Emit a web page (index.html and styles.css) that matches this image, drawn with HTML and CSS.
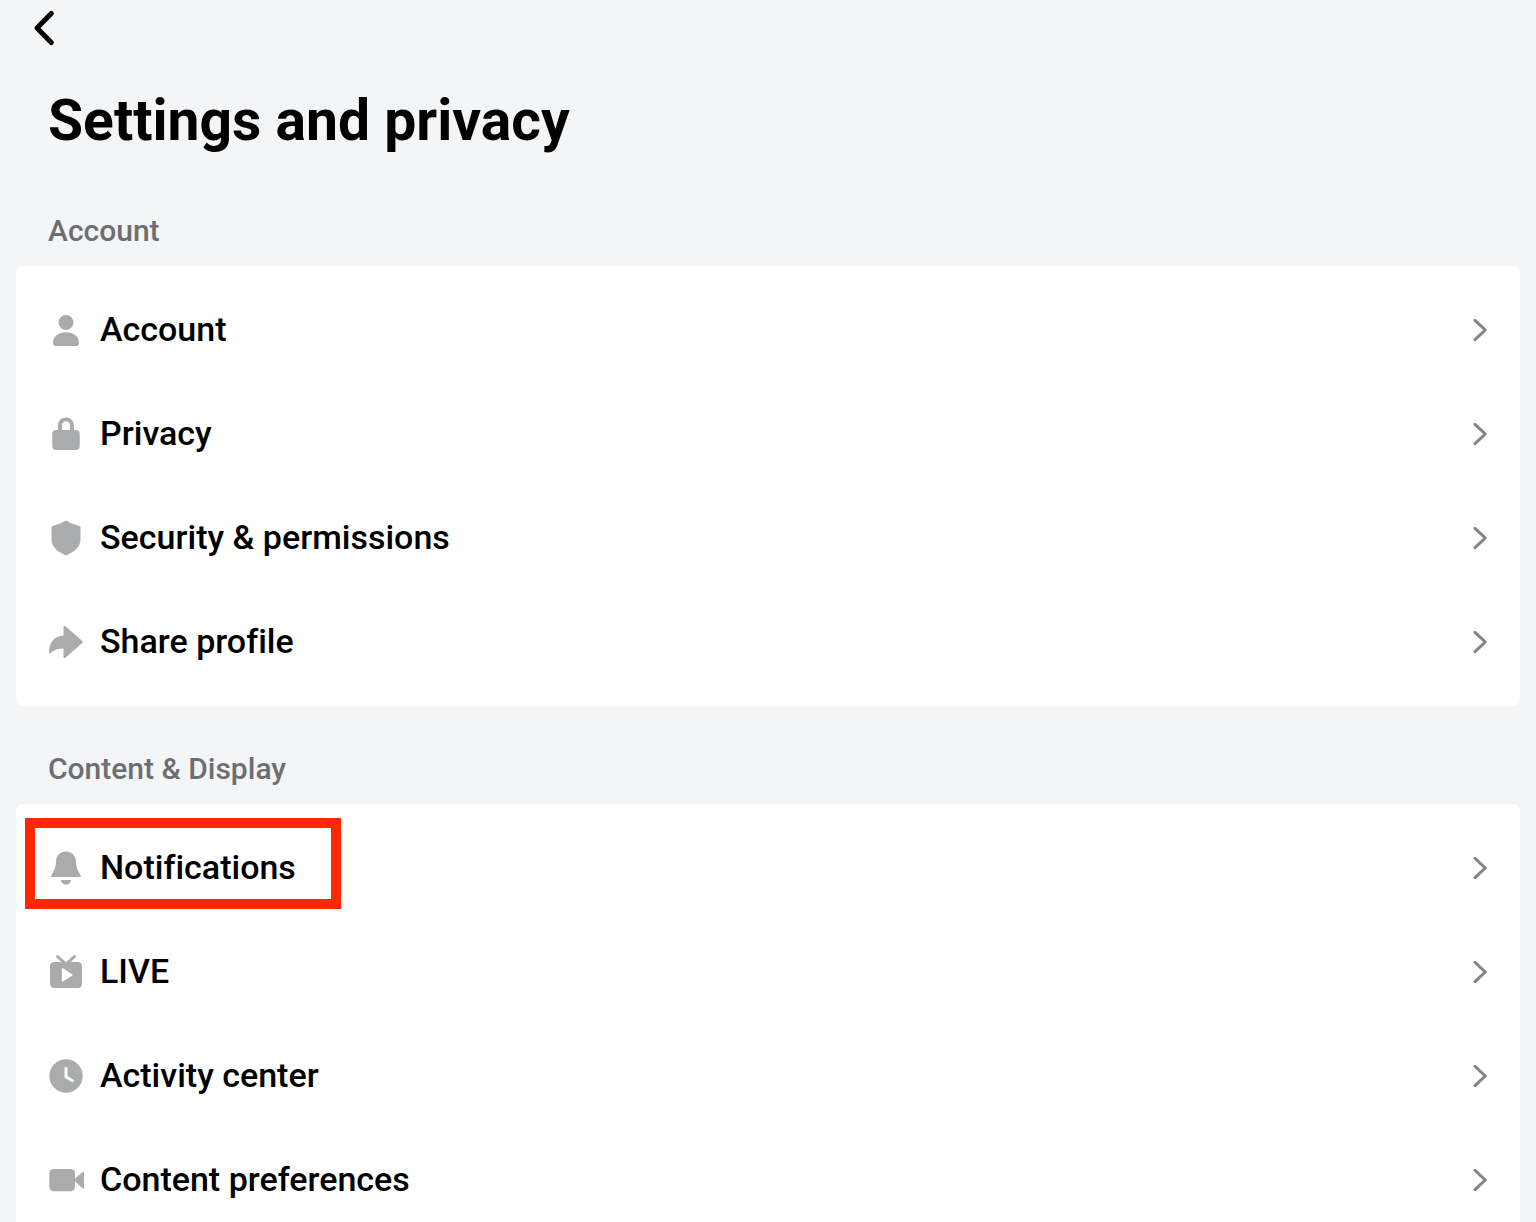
FILE: index.html
```html
<!DOCTYPE html>
<html lang="en">
	<head>
		<meta charset="utf-8">
		<title>Settings and privacy</title>
		<link rel="stylesheet" href="styles.css">
	</head>
	<body>
		<header class="header">
			<button class="back" type="button" aria-label="Back">
				<svg width="24" height="40" viewBox="0 0 24 40"><path d="M19.300 5.500 5 20l14.300 14.500" fill="none" stroke="#000" stroke-width="5" stroke-linecap="round" stroke-linejoin="round"/></svg>
			</button>
			<h1 class="title">Settings and privacy</h1>
		</header>
		<main>
			<section class="group">
				<h2 class="group-title">Account</h2>
				<ul class="list">
					<li class="item">
						<a class="link" href="#account">
							<svg class="icon" viewBox="0 0 36 36"><circle cx="18" cy="10.500" r="7.500"/><path d="M18 20.300c7.500 0 13 4.700 13 10.400 0 2-.9 3.300-2.600 3.300H7.600C5.900 34 5 32.700 5 30.700c0-5.700 5.500-10.400 13-10.400Z"/></svg>
							<span class="label">Account</span>
							<svg class="arrow" viewBox="0 0 16 24"><path d="M3 2.300 13.300 12 3 21.700"/></svg>
						</a>
					</li>
					<li class="item">
						<a class="link" href="#privacy">
							<svg class="icon" viewBox="0 0 36 36"><path fill-rule="evenodd" d="M10 14v-4.300C10 5 13.400 1.500 18 1.500S26 5 26 9.700V14h1.500c3 0 4.200 1.200 4.200 4.200v11.500c0 3-1.200 4.300-4.200 4.300h-19c-3 0-4.200-1.300-4.200-4.300V18.200c0-3 1.200-4.200 4.200-4.200H10Zm4 0h8V9.700c0-2.600-1.600-4.400-4-4.400s-4 1.800-4 4.400V14Z"/></svg>
							<span class="label">Privacy</span>
							<svg class="arrow" viewBox="0 0 16 24"><path d="M3 2.300 13.300 12 3 21.700"/></svg>
						</a>
					</li>
					<li class="item">
						<a class="link" href="#security">
							<svg class="icon" viewBox="0 0 36 36"><path d="M17 1.100c.7-.4 1.300-.4 2 0 4.100 2.600 8 4.100 12.300 4.800.8.100 1.200.6 1.200 1.400V19c0 7.600-5.500 12.600-13.500 15.900-.7.300-1.300.3-2 0C9 31.600 3.500 26.600 3.500 19V7.300c0-.8.400-1.300 1.200-1.400C9 5.200 12.900 3.700 17 1.100Z"/></svg>
							<span class="label">Security &amp; permissions</span>
							<svg class="arrow" viewBox="0 0 16 24"><path d="M3 2.300 13.300 12 3 21.700"/></svg>
						</a>
					</li>
					<li class="item">
						<a class="link" href="#share">
							<svg class="icon" viewBox="0 0 36 36"><path d="M15.500 3.200c0-1.300 1.200-1.700 2.200-.8l16.500 14.500c.8.700.8 1.500 0 2.200L17.700 33.600c-1 .9-2.200.5-2.200-.8v-8.300c-5-.1-9 1-12.600 4.300-1 .9-2 .4-1.900-.9C1.600 18.500 6.400 12 15.500 11.600V3.200Z"/></svg>
							<span class="label">Share profile</span>
							<svg class="arrow" viewBox="0 0 16 24"><path d="M3 2.300 13.300 12 3 21.700"/></svg>
						</a>
					</li>
				</ul>
			</section>
			<section class="group">
				<h2 class="group-title">Content &amp; Display</h2>
				<ul class="list">
					<li class="item highlight">
						<a class="link" href="#notifications">
							<svg class="icon" viewBox="0 0 36 36"><path d="M18 1.500c5.700 0 9.600 4 10 9.700.3 5.300 1.100 8.800 4.600 13.900.6.900.2 1.900-.9 1.900H4.300c-1.100 0-1.500-1-.9-1.900C6.900 20 7.700 16.500 8 11.200 8.400 5.500 12.300 1.500 18 1.500ZM13 30h10c0 2.500-2.200 4.500-5 4.500s-5-2-5-4.500Z"/></svg>
							<span class="label">Notifications</span>
							<svg class="arrow" viewBox="0 0 16 24"><path d="M3 2.300 13.300 12 3 21.700"/></svg>
						</a>
					</li>
					<li class="item">
						<a class="link" href="#live">
							<svg class="icon" viewBox="0 0 36 36"><path fill-rule="evenodd" d="M6.500 8h23c3 0 4.500 1.500 4.500 4.500v17c0 3-1.500 4.500-4.500 4.500h-23c-3 0-4.500-1.500-4.500-4.500v-17C2 9.500 3.500 8 6.500 8Zm7.300 6.900v12c0 .7.600 1.100 1.200.7l9.100-5.900c.5-.3.500-1.100 0-1.400L15 14.200c-.6-.4-1.200 0-1.200.7Z"/><path d="m9.500 2.500 8.500 7.700 8.500-7.700" fill="none" stroke="#a9abac" stroke-width="3" stroke-linecap="round"/></svg>
							<span class="label">LIVE</span>
							<svg class="arrow" viewBox="0 0 16 24"><path d="M3 2.300 13.300 12 3 21.700"/></svg>
						</a>
					</li>
					<li class="item">
						<a class="link" href="#activity">
							<svg class="icon" viewBox="0 0 36 36"><circle cx="18" cy="18" r="16.700"/><path d="M18 9.300v9.500l7.300 4.500" fill="none" stroke="#fff" stroke-width="3"/></svg>
							<span class="label">Activity center</span>
							<svg class="arrow" viewBox="0 0 16 24"><path d="M3 2.300 13.300 12 3 21.700"/></svg>
						</a>
					</li>
					<li class="item">
						<a class="link" href="#content">
							<svg class="icon" viewBox="0 0 36 36"><rect x="1.300" y="7" width="25.700" height="22.300" rx="4.500"/><path d="M26.500 18c0-.7.300-1.300.9-1.800l6.600-5.700c1-.9 2-.5 2 .7v14.200c0 1.200-1 1.600-2 .7l-6.600-6.300c-.6-.5-.9-1.100-.9-1.800Z"/></svg>
							<span class="label">Content preferences</span>
							<svg class="arrow" viewBox="0 0 16 24"><path d="M3 2.300 13.300 12 3 21.700"/></svg>
						</a>
					</li>
				</ul>
			</section>
		</main>
	</body>
</html>
```
FILE: styles.css
```css
* {
	margin: 0;
	padding: 0;
	box-sizing: border-box;
}

ul {
	list-style: none;
}

body {
	height: 100vh;
	overflow: hidden;
	padding: 0 16px;
	background: #f4f5f7;
	color: #000;
	font-family: Roboto, "Liberation Sans", sans-serif;
	font-variant-ligatures: none;
}

.header {
	padding: 8px 16px 0;
}

.back {
	display: block;
	width: 24px;
	height: 40px;
	border: 0;
	background: none;
	cursor: pointer;
}

.title {
	margin-top: 41px;
	padding: 0 16px;
	font-size: 57px;
	line-height: 64px;
	font-weight: 700;
}

.group {
	padding-top: 43px;
}

.group-title {
	padding: 0 32px 15px;
	font-size: 30px;
	line-height: 40px;
	font-weight: 500;
	color: #6d6e71;
}

.header + main .group:first-child {
	padding-top: 58px;
}

.list {
	padding: 12px 0;
	border-radius: 6px;
	background: #fff;
}

.item {
	position: relative;
}

.link {
	display: flex;
	align-items: center;
	gap: 16px;
	height: 104px;
	padding: 0 32px;
	color: #000;
	text-decoration: none;
}

.icon {
	flex: none;
	width: 36px;
	height: 36px;
	fill: #a9abac;
}

.label {
	flex: 1;
	padding-bottom: 2px;
	font-size: 34px;
	line-height: 44px;
	font-weight: 500;
}

.arrow {
	flex: none;
	width: 16px;
	height: 24px;
	fill: none;
	stroke: #838485;
	stroke-width: 3;
	stroke-linecap: round;
	stroke-linejoin: round;
}

/* red frame around the notifications row */
.highlight::after {
	content: "";
	box-sizing: border-box;
	position: absolute;
	left: 9px;
	top: 2px;
	width: 316px;
	height: 91px;
	border: 10px solid #ff2600;
	pointer-events: none;
}
```
